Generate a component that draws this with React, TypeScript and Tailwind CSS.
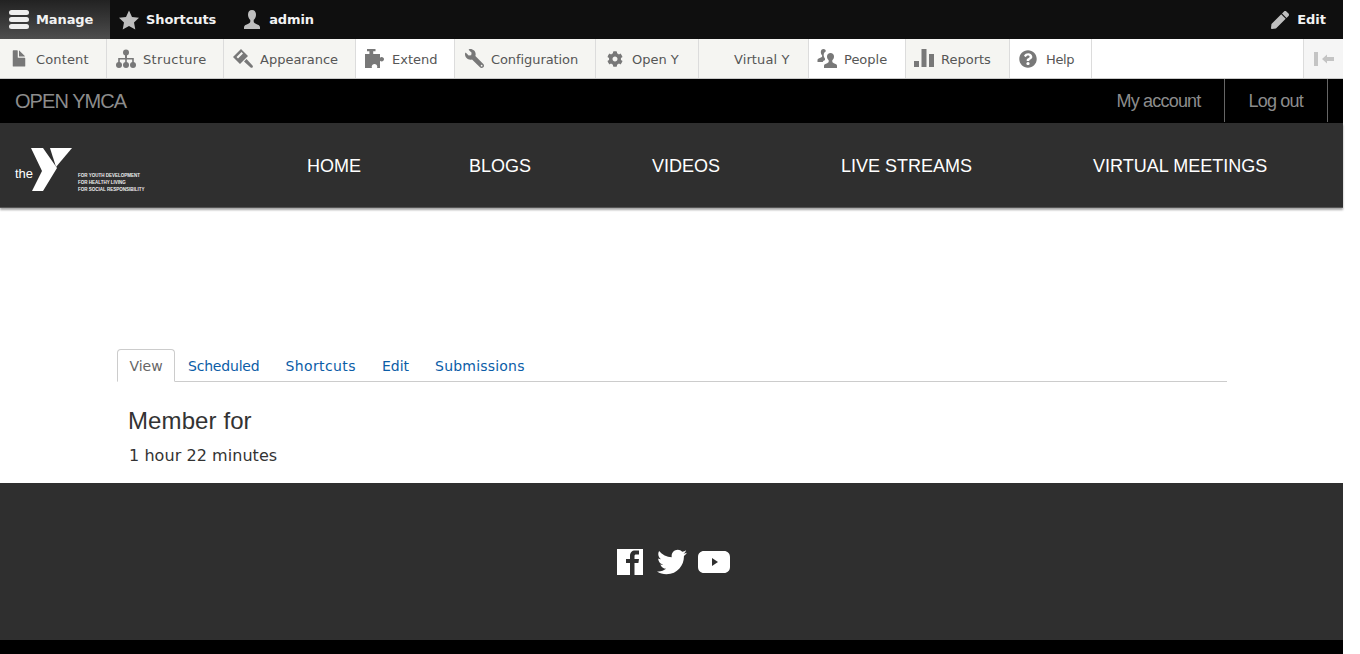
import React from 'react';
import { FaCog, FaPen, FaQuestionCircle, FaTwitter, FaWrench } from 'react-icons/fa';

const iconGray = 'text-[#787878]';

const PersonIcon = ({ className }: { className: string }) => (
  <svg viewBox="0 0 20 20" className={className} fill="currentColor">
    <path d="M10 0c-2.600 0-4 2-4 4.700 0 2.200 1 4.200 2.300 5.300v1.600c0 1-.8 1.500-2 2.100-2 .9-4.300 1.500-4.300 3.500v1.800h16v-1.800c0-2-2.300-2.600-4.300-3.500-1.200-.6-2-1.100-2-2.100v-1.600c1.300-1.100 2.300-3.100 2.300-5.300 0-2.700-1.400-4.700-4-4.700z" />
  </svg>
);

const StarIcon = () => (
  <svg viewBox="0 0 20 20" className="w-5 h-5 text-[#bebebe]" fill="currentColor">
    <path d="M10 .5l3 6.500 7 .8-5 4.700 1.300 7L10 16l-6.300 3.500 1.300-7-5-4.700L7 7z" />
  </svg>
);

const FileIcon = () => (
  <svg viewBox="0 0 16 16" className={`w-5 h-5 ${iconGray}`} fill="currentColor">
    <path d="M12.502 7h-5c-.276 0-.502-.225-.502-.5v-5c0-.275-.225-.5-.5-.5h-3c-.275 0-.5.225-.5.5v12.029c0 .275.225.5.5.5h9.002c.275 0 .5-.225.5-.5v-6.029c0-.275-.225-.5-.5-.5zM8.502 6h4c.275 0 .34-.159.146-.354l-4.293-4.292c-.195-.195-.353-.129-.353.146v4c0 .275.225.5.5.5z" />
  </svg>
);

const TreeIcon = () => (
  <svg viewBox="0 0 20 20" className={`w-5 h-5 ${iconGray}`} fill="currentColor">
    <circle cx="10" cy="3.500" r="3" />
    <circle cx="3" cy="16" r="3" />
    <circle cx="10" cy="16" r="3" />
    <circle cx="17" cy="16" r="3" />
    <path d="M9 5h2v4h6.800v5h-1.600v-3.400H10.800V14H9.200v-3.400H3.800V14H2.200V9H9z" />
  </svg>
);

const BrushIcon = () => (
  <svg viewBox="0 0 20 20" className={`w-5 h-5 ${iconGray}`} fill="currentColor">
    <path fillRule="evenodd" d="M0 8l8-8 7 7-8 8zM3.500 8l1.500 1.500 5-5L8.500 3z" />
    <path d="M11 12.500l2.500-2.500 6 6.500c.6.700.5 1.400 0 1.900s-1.300.6-1.900 0z" />
  </svg>
);

const PuzzleIcon = () => (
  <svg viewBox="0 0 20 20" className={`w-5 h-5 ${iconGray}`} fill="currentColor">
    <path d="M2 0h8.500v2.200H8.200V5H15v3.700c.4-.4 1-.7 1.700-.7C18 8 19 9 19 10.200s-1 2.300-2.300 2.300c-.7 0-1.300-.3-1.700-.7V19h-3c.2-.4.300-.8.300-1.200 0-1.600-1.300-2.800-2.800-2.800s-2.800 1.200-2.800 2.800c0 .4.100.8.300 1.200H0V5h4.400V2.200H2z" />
  </svg>
);

const PeopleIcon = () => (
  <svg viewBox="0 0 20 20" className={`w-5 h-5 ${iconGray}`} fill="currentColor">
    <path d="M6.500 0C4.900 0 3.800 1.300 3.800 3c0 1.400.6 2.600 1.300 3.300v1c0 .7-.5 1-1.200 1.300C2.600 9.200.5 9.600.5 11v2h5.300c.3-1 1.200-1.500 2.200-2V9.400C7.200 8.600 6.700 7.200 6.700 6c0-1.600.8-3 2.200-3.700C8.600.9 7.800 0 6.500 0z" />
    <path d="M13.500 4C11.500 4 10 5.500 10 7.500c0 1.600.8 3 1.700 3.800v1.300c0 .8-.6 1.200-1.500 1.600-1.700.7-3.200 1.100-3.200 2.500V19h13v-2.300c0-1.400-1.500-1.800-3.200-2.500-.9-.4-1.500-.8-1.500-1.600v-1.300c.9-.8 1.700-2.200 1.700-3.800C17 5.500 15.500 4 13.500 4z" />
  </svg>
);

const BarsIcon = () => (
  <svg viewBox="0 0 20 20" className={`w-5 h-5 ${iconGray}`} fill="currentColor">
    <path d="M0 12h5v6H0zM7.500 0h5v18h-5zM15 5h5v13h-5z" />
  </svg>
);

const adminTabs: { label: string; icon: React.ReactNode; cls: string; iconCls: string; active?: boolean }[] = [
  { label: 'Content', icon: <FileIcon />, cls: 'w-[107px] pl-9 tracking-[0.15px]', iconCls: 'left-[9px]' },
  { label: 'Structure', icon: <TreeIcon />, cls: 'w-[117px] pl-9 tracking-[0.35px]', iconCls: 'left-[9px]' },
  { label: 'Appearance', icon: <BrushIcon />, cls: 'w-[132px] pl-9', iconCls: 'left-[9px]' },
  { label: 'Extend', icon: <PuzzleIcon />, cls: 'w-[99px] pl-9', iconCls: 'left-[9px]', active: true },
  { label: 'Configuration', icon: <FaWrench className={`w-[19px] h-[19px] -scale-x-100 ${iconGray}`} />, cls: 'w-[141px] pl-9 tracking-[-0.08px]', iconCls: 'left-[9px]' },
  { label: 'Open Y', icon: <FaCog className={`w-4 h-4 ${iconGray}`} />, cls: 'w-[103px] pl-9', iconCls: 'left-[9px]' },
  { label: 'Virtual Y', icon: null, cls: 'w-[110px] pl-[35px] tracking-[0.1px]', iconCls: 'left-[9px]' },
  { label: 'People', icon: <PeopleIcon />, cls: 'w-[97px] pl-[35px]', iconCls: 'left-[8px]', active: true },
  { label: 'Reports', icon: <BarsIcon />, cls: 'w-[104px] pl-[35px]', iconCls: 'left-[8px]' },
  { label: 'Help', icon: <FaQuestionCircle className={`w-[18px] h-[18px] ${iconGray}`} />, cls: 'w-[82px] pl-9 tracking-[-0.4px]', iconCls: 'left-[8px]', active: true },
];

const navLinks = ['BLOGS', 'VIDEOS', 'LIVE STREAMS', 'VIRTUAL MEETINGS'];
const tabLinks = [
  { label: 'Scheduled', cls: 'tracking-[-0.2px]' },
  { label: 'Shortcuts', cls: 'tracking-[0.4px]' },
  { label: 'Edit', cls: '' },
  { label: 'Submissions', cls: 'tracking-[0.2px]' },
];

const App = () => {
  return (
    <div className="w-[1343px] min-h-[654px] bg-white font-['Liberation_Sans',sans-serif]">
      {/* admin toolbar */}
      <div className="h-[39px] bg-[#0f0f0f] flex items-stretch font-['DejaVu_Sans',sans-serif] text-[13px] font-bold text-[#f2f2f2]">
        <div className="w-[110px] flex items-center pl-[9px] bg-gradient-to-b from-[#222] to-[#4e4e4e]">
          <div className="w-5 flex flex-col gap-[2px]">
            <span className="h-[5px] rounded-sm bg-[#eee]" />
            <span className="h-[5px] rounded-sm bg-[#eee]" />
            <span className="h-[5px] rounded-sm bg-[#eee]" />
          </div>
          <span className="ml-[7px] pt-px tracking-[-0.1px]">Manage</span>
        </div>
        <div className="flex items-center pl-[9px]">
          <StarIcon />
          <span className="ml-[7px] pt-px tracking-[-0.1px]">Shortcuts</span>
        </div>
        <div className="flex items-center ml-[26px]">
          <PersonIcon className="w-5 h-5 text-[#bebebe]" />
          <span className="ml-[7px] pt-px tracking-[-0.1px]">admin</span>
        </div>
        <div className="ml-auto flex items-center pr-[17px]">
          <FaPen className="w-[18px] h-[18px] text-[#bebebe]" />
          <span className="ml-[8px] pt-px">Edit</span>
        </div>
      </div>

      <div className="h-10 bg-white border-b border-[#c9c9c9] flex font-['DejaVu_Sans',sans-serif] text-[13px] text-[#565656]">
        {adminTabs.map((tab) => (
          <div
            key={tab.label}
            className={`relative flex items-center pt-0.5 border-r border-[#dcdcdc] ${tab.cls} ${tab.active ? 'bg-white' : 'bg-[#f5f5f2]'}`}
          >
            <span className={`absolute top-0 bottom-0 w-5 flex items-center justify-center ${tab.iconCls}`}>{tab.icon}</span>
            {tab.label}
          </div>
        ))}
        <div className="ml-auto w-10 bg-[#f5f5f5] border-l border-[#dcdcdc] flex items-center justify-center text-[#c4c4c4]">
          <svg viewBox="0 0 20 14" className="w-5 h-[14px]" fill="currentColor">
            <path d="M0 0h4v14H0zM8 7l5-4.500V5h7v4h-7v2.500z" />
          </svg>
        </div>
      </div>

      {/* site header */}
      <div className="h-11 bg-black flex items-center text-[#8c8c8c]">
        <span className="ml-[15px] text-xl tracking-[-0.95px]">OPEN YMCA</span>
        <div className="ml-auto mr-[15px] flex self-stretch text-lg tracking-[-0.8px]">
          <span className="flex items-center pr-[23px]">My account</span>
          <span className="flex items-center pl-6 pr-6 border-x border-[#666] mb-px">Log out</span>
        </div>
      </div>

      <div className="h-[85px] bg-[#2f2f2f] flex items-center shadow-[0_2px_2px_rgba(0,0,0,0.35)] border-b border-[#555] relative">
        <div className="relative w-[307px] h-full shrink-0">
          <span className="absolute left-[15px] top-[44px] text-[13px] leading-none text-white">the</span>
          <svg viewBox="0 0 160 85" className="absolute left-0 top-0 w-[160px] h-[85px]" fill="#fff">
            <path d="M31 25h12l14 20-14 23H32l10-20z" />
            <path d="M50 25h22L56 44z" />
          </svg>
          <div className="absolute left-[78px] top-[49px] text-[4.5px] font-bold leading-[7px] text-[#eee] whitespace-nowrap">
            <div>FOR YOUTH DEVELOPMENT</div>
            <div>FOR HEALTHY LIVING</div>
            <div>FOR SOCIAL RESPONSIBILITY</div>
          </div>
        </div>
        <div className="flex gap-[121px] pt-0.5 text-lg text-white whitespace-nowrap">
          <span className="-mr-[13px]">HOME</span>
          {navLinks.map((link) => (
            <span key={link}>{link}</span>
          ))}
        </div>
      </div>

      {/* main content */}
      <main className="h-[275px] pt-[141px] px-[117px] font-['DejaVu_Sans',sans-serif]">
        <div className="w-[1110px] h-[33px] flex border-b border-[#ccc] text-sm">
          <span className="w-[58px] h-[33px] flex items-center justify-center border border-b-white border-[#ccc] rounded-t bg-white text-[#666]">View</span>
          {tabLinks.map((tab) => (
            <span key={tab.label} className={`flex items-center px-[13px] h-[33px] text-[#0b5da7] ${tab.cls}`}>{tab.label}</span>
          ))}
        </div>
        <h1 className="ml-[11px] mt-[25px] text-2xl leading-7 tracking-[0.1px] text-[#333] font-['Liberation_Sans',sans-serif]">Member for</h1>
        <p className="ml-3 mt-[9px] text-base leading-6 tracking-[0.06px] text-[#333]">1 hour 22 minutes</p>
      </main>

      <footer className="h-[157px] pl-1 bg-[#2f2f2f] flex items-center justify-center text-white">
        <svg viewBox="0 0 26 26" className="w-[26px] h-[26px]" fill="currentColor">
          <path fillRule="evenodd" d="M0 0h26v26H0zM13 26V14H9v-4h4V7c0-3.500 2-5.500 5-5.500h4v4h-3c-1 0-1.500.5-1.500 1.500v3h4.500l-.6 4h-3.900v12z" />
        </svg>
        <FaTwitter size={30} className="ml-[14px]" />
        <svg viewBox="0 0 32 22" className="w-8 h-[22px] ml-[11px]" fill="currentColor">
          <path fillRule="evenodd" d="M6 0h20c3.500 0 6 2.500 6 6v10c0 3.500-2.500 6-6 6H6c-3.500 0-6-2.500-6-6V6c0-3.500 2.500-6 6-6zM14 7v8l6-4z" />
        </svg>
      </footer>
      <div className="h-[14px] bg-black" />
    </div>
  );
};

export default App;
